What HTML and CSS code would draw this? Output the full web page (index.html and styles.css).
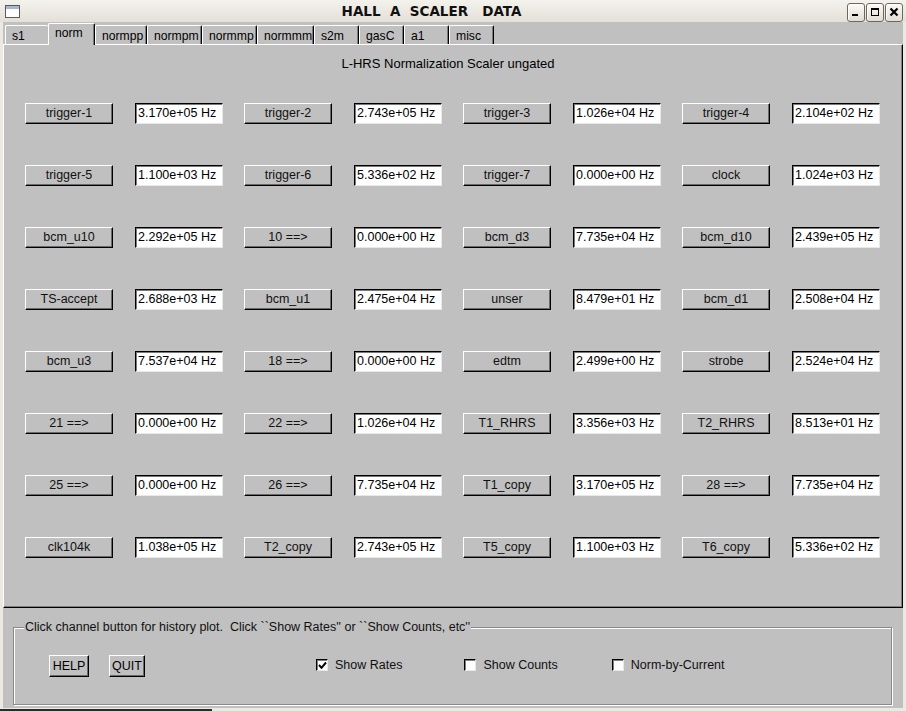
FILE: index.html
```html
<!DOCTYPE html>
<html>
<head>
<meta charset="utf-8">
<link rel="stylesheet" href="styles.css">
</head>
<body>
<div class="window">
  <div class="titlebar">
    <div class="wicon">
      <svg width="15" height="13" viewBox="0 0 15 13"><rect x="0.5" y="0.5" width="14" height="12" fill="#ffffff" stroke="#5a5a5a"/><rect x="1" y="1" width="13" height="3" fill="#a9b8cf"/></svg>
    </div>
    <div class="title">HALL  A  SCALER   DATA</div>
    <div class="wbtns">
      <span class="wb"><svg width="10" height="10" viewBox="0 0 10 10"><rect x="1" y="7" width="6" height="2" fill="#000"/></svg></span>
      <span class="wb"><svg width="10" height="10" viewBox="0 0 10 10"><rect x="1.5" y="1.5" width="7" height="7" fill="none" stroke="#000"/><rect x="1" y="1" width="8" height="2" fill="#000"/></svg></span>
      <span class="wb"><svg width="10" height="10" viewBox="0 0 10 10"><path d="M1.5 1.5 L8.5 8.5 M8.5 1.5 L1.5 8.5" stroke="#000" stroke-width="2.2"/></svg></span>
    </div>
  </div>
  <div class="client">
    <div class="tabs">
      <div class="tab before w43">s1</div>
      <div class="tab sel w47">norm</div>
      <div class="tab w52">normpp</div>
      <div class="tab w55">normpm</div>
      <div class="tab w55">normmp</div>
      <div class="tab w57">normmm</div>
      <div class="tab w45">s2m</div>
      <div class="tab w45">gasC</div>
      <div class="tab w45">a1</div>
      <div class="tab w45">misc</div>
    </div>
    <div class="panel">
      <div class="heading">L-HRS Normalization Scaler ungated</div>
      <div class="grid">
        <div class="btn">trigger-1</div><div class="field">3.170e+05 Hz</div>
        <div class="btn">trigger-2</div><div class="field">2.743e+05 Hz</div>
        <div class="btn">trigger-3</div><div class="field">1.026e+04 Hz</div>
        <div class="btn">trigger-4</div><div class="field">2.104e+02 Hz</div>

        <div class="btn">trigger-5</div><div class="field">1.100e+03 Hz</div>
        <div class="btn">trigger-6</div><div class="field">5.336e+02 Hz</div>
        <div class="btn">trigger-7</div><div class="field">0.000e+00 Hz</div>
        <div class="btn">clock</div><div class="field">1.024e+03 Hz</div>

        <div class="btn">bcm_u10</div><div class="field">2.292e+05 Hz</div>
        <div class="btn">10 ==&gt;</div><div class="field">0.000e+00 Hz</div>
        <div class="btn">bcm_d3</div><div class="field">7.735e+04 Hz</div>
        <div class="btn">bcm_d10</div><div class="field">2.439e+05 Hz</div>

        <div class="btn">TS-accept</div><div class="field">2.688e+03 Hz</div>
        <div class="btn">bcm_u1</div><div class="field">2.475e+04 Hz</div>
        <div class="btn">unser</div><div class="field">8.479e+01 Hz</div>
        <div class="btn">bcm_d1</div><div class="field">2.508e+04 Hz</div>

        <div class="btn">bcm_u3</div><div class="field">7.537e+04 Hz</div>
        <div class="btn">18 ==&gt;</div><div class="field">0.000e+00 Hz</div>
        <div class="btn">edtm</div><div class="field">2.499e+00 Hz</div>
        <div class="btn">strobe</div><div class="field">2.524e+04 Hz</div>

        <div class="btn">21 ==&gt;</div><div class="field">0.000e+00 Hz</div>
        <div class="btn">22 ==&gt;</div><div class="field">1.026e+04 Hz</div>
        <div class="btn">T1_RHRS</div><div class="field">3.356e+03 Hz</div>
        <div class="btn">T2_RHRS</div><div class="field">8.513e+01 Hz</div>

        <div class="btn">25 ==&gt;</div><div class="field">0.000e+00 Hz</div>
        <div class="btn">26 ==&gt;</div><div class="field">7.735e+04 Hz</div>
        <div class="btn">T1_copy</div><div class="field">3.170e+05 Hz</div>
        <div class="btn">28 ==&gt;</div><div class="field">7.735e+04 Hz</div>

        <div class="btn">clk104k</div><div class="field">1.038e+05 Hz</div>
        <div class="btn">T2_copy</div><div class="field">2.743e+05 Hz</div>
        <div class="btn">T5_copy</div><div class="field">1.100e+03 Hz</div>
        <div class="btn">T6_copy</div><div class="field">5.336e+02 Hz</div>
      </div>
    </div>
    <div class="bottom">
      <div class="group">
        <span class="legend">Click channel button for history plot.  Click ``Show Rates'' or ``Show Counts, etc''</span>
        <div class="controls">
          <div class="pbtn help">HELP</div>
          <div class="pbtn quit">QUIT</div>
          <label class="chk c1"><span class="box"><svg width="9" height="9" viewBox="0 0 9 9"><path d="M1 4 L3.5 6.8 L8 1.5" fill="none" stroke="#000" stroke-width="2"/></svg></span>Show Rates</label>
          <label class="chk c2"><span class="box"></span>Show Counts</label>
          <label class="chk c3"><span class="box"></span>Norm-by-Current</label>
        </div>
      </div>
    </div>
  </div>
  <div class="footer"><div class="fline"></div></div>
</div>
</body>
</html>
```

FILE: styles.css
```css
* { box-sizing: border-box; }
html, body { margin: 0; padding: 0; }
body {
  background: #ece9e2;
  font-family: "Liberation Sans", Arial, Helvetica, sans-serif;
  font-size: 12.5px;
  color: #000;
}
.window {
  width: 906px;
  height: 711px;
  overflow: hidden;
  background: #ece9e2;
  display: flex;
  flex-direction: column;
}
.titlebar {
  height: 22px;
  flex: none;
  display: flex;
  align-items: center;
  background: linear-gradient(#f4f2ed, #e4e0d8);
}
.wicon {
  width: 22px;
  padding-left: 5px;
  display: flex;
  align-items: center;
  margin-top: 1px;
}
.title {
  flex: 1;
  text-align: center;
  white-space: pre;
  font-weight: bold;
  font-size: 13.5px;
  font-family: "DejaVu Sans", "Liberation Sans", sans-serif;
  color: #111;
  padding-right: 6px;
}
.wbtns {
  display: flex;
  gap: 1px;
  padding-right: 3px;
  margin-top: 2px;
}
.wb {
  width: 18px;
  height: 19px;
  border: 1px solid #6e685c;
  border-radius: 3px;
  background: linear-gradient(#fbfaf7, #e2ddd2);
  box-shadow: inset 1px 1px 0 #fff;
  display: flex;
  align-items: center;
  justify-content: center;
}
.client {
  flex: none;
  margin: 0 3px 0 3px;
  height: 686px;
  background: #c0c0c0;
  display: flex;
  flex-direction: column;
}
.tabs {
  height: 22px;
  flex: none;
  display: flex;
  align-items: flex-end;
  padding-left: 2px;
  position: relative;
  z-index: 2;
  font-size: 12.2px;
}
.tab {
  height: 19px;
  padding-left: 6px;
  padding-top: 3px;
  border-top: 1px solid #fff;
  border-left: 1px solid #fff;
  border-right: 1px solid #000;
  box-shadow: inset -1px 0 0 #7c7c7c;
  border-radius: 2px 2px 0 0;
  line-height: 14px;
  white-space: nowrap;
}
.tab.before { border-right: none; box-shadow: none; }
.tab.sel {
  height: 22px;
  margin-bottom: -1px;
  padding-top: 2px;
  background: #c0c0c0;
}
.w43 { width: 43px; }
.w45 { width: 45px; }
.w47 { width: 47px; }
.w52 { width: 52px; }
.w55 { width: 55px; }
.w57 { width: 57px; }
.panel {
  height: 564px;
  flex: none;
  border-top: 1px solid #fff;
  border-left: 1px solid #fff;
  border-right: 1px solid #000;
  border-bottom: 1px solid #000;
  box-shadow: inset -1px -1px 0 #808080;
  display: flex;
  flex-direction: column;
}
.heading {
  margin-top: 12px;
  height: 14px;
  line-height: 14px;
  text-align: center;
  font-size: 13px;
  padding-right: 10px;
}
.grid {
  margin-top: 32px;
  padding-left: 21px;
  display: grid;
  grid-template-columns: repeat(4, 110px 109px);
  grid-auto-rows: 21px;
  row-gap: 41px;
}
.btn {
  width: 88px;
  height: 21px;
  border-top: 1px solid #fff;
  border-left: 1px solid #fff;
  border-right: 1px solid #000;
  border-bottom: 1px solid #000;
  box-shadow: inset -1px -1px 0 #6a6a6a;
  display: flex;
  align-items: center;
  justify-content: center;
  padding-bottom: 1px;
  color: #111;
  white-space: pre;
}
.field {
  width: 88px;
  height: 21px;
  background: #fff;
  border-top: 1px solid #000;
  border-left: 1px solid #000;
  border-right: 1px solid #e8e8e8;
  border-bottom: 1px solid #e8e8e8;
  box-shadow: inset 1px 1px 0 #7a7a7a;
  padding-left: 2px;
  line-height: 18px;
  white-space: nowrap;
  overflow: hidden;
}
.bottom {
  flex: 1;
  padding: 19px 11px 0 10px;
}
.group {
  position: relative;
  height: 78px;
  border: 1px solid #8a8a8a;
  box-shadow: inset 1px 1px 0 #fff, 1px 1px 0 #fff;
}
.legend {
  position: absolute;
  top: -8px;
  left: 10px;
  padding: 0 1px;
  background: #c0c0c0;
  line-height: 14px;
  white-space: pre;
  color: #111;
}
.controls {
  display: flex;
  align-items: center;
  padding-top: 27px;
  padding-left: 35px;
}
.pbtn {
  height: 22px;
  border-top: 1px solid #fff;
  border-left: 1px solid #fff;
  border-right: 1px solid #000;
  border-bottom: 1px solid #000;
  box-shadow: inset -1px -1px 0 #6a6a6a;
  display: flex;
  align-items: center;
  justify-content: center;
  padding-bottom: 1px;
}
.help { width: 40px; }
.quit { width: 36px; margin-left: 20px; }
.chk {
  display: flex;
  align-items: center;
  color: #111;
  margin-top: -2px;
}
.c1 { margin-left: 171px; }
.c2 { margin-left: 62px; }
.c3 { margin-left: 54px; }
.box {
  width: 12px;
  height: 12px;
  background: #fff;
  border-top: 1px solid #000;
  border-left: 1px solid #000;
  border-right: 1px solid #e8e8e8;
  border-bottom: 1px solid #e8e8e8;
  box-shadow: inset 1px 1px 0 #808080;
  margin-right: 7px;
  display: flex;
  align-items: center;
  justify-content: center;
}
.footer {
  flex: 1;
  position: relative;
}
.fline {
  margin-top: 1px;
  width: 212px;
  height: 2px;
  background: #2b2b2b;
}
```
